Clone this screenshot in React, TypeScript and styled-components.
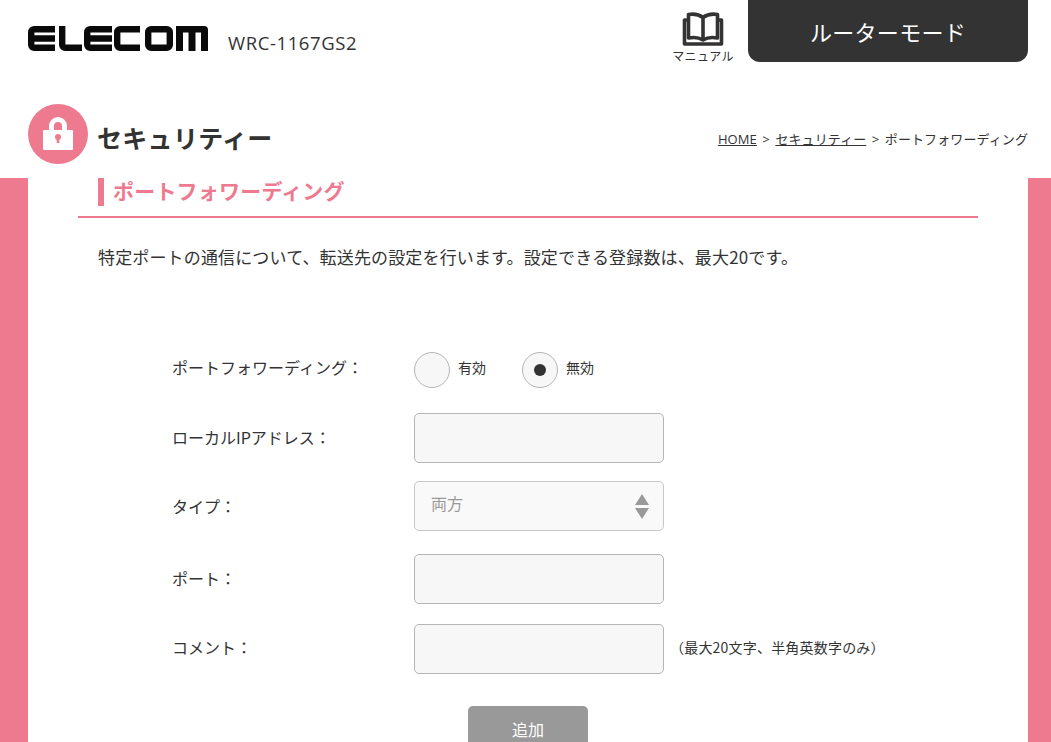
import React from "react";
import styled, { createGlobalStyle } from "styled-components";

const Global = createGlobalStyle`
  html, body { margin: 0; padding: 0; background: #fff; height: 742px; overflow: hidden; }
  * { box-sizing: border-box; }
  body { font-family: "Noto Sans CJK JP", "Noto Sans", sans-serif; color: #333; }
`;
const Page = styled.div`width: 1051px; height: 742px; overflow: hidden; background: #fff;`;
const Header = styled.header`display: flex; height: 62px; padding-left: 28px; align-items: flex-start; margin-bottom: 42px;`;
const Logo = styled.svg`width: 180px; height: 25px; margin-top: 26px; flex: none;`;
const Model = styled.span`margin: 31px 0 0 20px; font: 18.5px/24px "Open Sans", Arial, sans-serif; letter-spacing: 0.6px; color: #333;`;
const ManualLink = styled.a`margin-left: auto; width: 60px; display: flex; flex-direction: column; align-items: center; margin-right: 15px; padding-top: 12px; font-size: 12px; line-height: 16px; letter-spacing: 0.4px; white-space: nowrap; color: #333;`;
const ManualIcon = styled.svg`width: 42px; height: 34px; margin-bottom: 2px; flex: none;`;
const Mode = styled.div`width: 280px; height: 62px; margin-right: 23px; background: #333; color: #fff; border-radius: 0 0 12px 12px; font-size: 22px; letter-spacing: 0.3px; display: flex; align-items: center; justify-content: center;`;
const TitleBar = styled.div`display: flex; align-items: center; height: 60px; padding: 0 23px 0 28px; margin-bottom: 14px;`;
const Badge = styled.svg`width: 60px; height: 60px; flex: none; margin-right: 9px;`;
const Title = styled.h1`margin: 0; padding-top: 6px; font-size: 25px; letter-spacing: 0.3px; font-weight: 700; color: #333; line-height: 60px;`;
const Crumbs = styled.nav`margin-left: auto; font-family: "Open Sans", "Noto Sans CJK JP", sans-serif; font-size: 13px; letter-spacing: 0.1px; word-spacing: 2px; line-height: 20px; margin-top: 10px;`;
const Crumb = styled.a`color: #333; text-decoration: underline;`;
const Body = styled.div`background: #ee7a90; padding: 0 23px 0 28px; height: 564px;`;
const Panel = styled.main`background: #fff; height: 100%; padding: 0 50px;`;
const SectionHead = styled.div`border-bottom: 2px solid #ee7a90; height: 40px; padding-left: 20px;`;
const SectionTitle = styled.h2`margin: 0; height: 28px; border-left: 6px solid #ee7a90; padding-left: 9px; font-size: 21px; letter-spacing: 0.2px; line-height: 24px; font-weight: 700; color: #ee7a90;`;
const Intro = styled.p`margin: 0; padding: 27px 0 0 20px; font-size: 17px; letter-spacing: 0.15px; line-height: 24px; color: #333;`;
const Form = styled.div`margin-top: 83px; padding-left: 94px; display: flex; flex-direction: column;`;
const Row = styled.div<{ $h: number; $gap?: number }>`display: flex; align-items: center; height: ${p => p.$h}px; margin-top: ${p => p.$gap ?? 0}px;`;
const Label = styled.label<{ $lift?: number }>`width: 242px; font-size: 16px; color: #333; flex: none; padding-bottom: ${p => p.$lift ?? 0}px;`;
const RadioDot = styled.span<{ $on?: boolean }>`
  width: 36px; height: 36px; border-radius: 50%; border: 1px solid #b5b5b5; background: #f7f7f7;
  display: flex; align-items: center; justify-content: center; flex: none;
  &::after { content: ""; width: 12px; height: 12px; border-radius: 50%; background: ${p => (p.$on ? "#333" : "transparent")}; }
`;
const RadioText = styled.span`font-size: 14px; margin: -6px 36px 0 8px; color: #333;`;
const Field = styled.div`width: 250px; height: 50px; flex: none; border: 1px solid #b5b5b5; border-radius: 5px; background: #f7f7f7;`;
const Select = styled(Field)`background: #f9f9f9; border-color: #c8c8c8; color: #999; font-size: 16px; display: flex; align-items: center; justify-content: space-between; padding: 0 14px 6px 16px;`;
const Arrows = styled.svg`width: 14px; height: 25px; margin-top: 6px;`;
const Note = styled.span`font-size: 14px; margin-left: 6px; letter-spacing: 0.2px; color: #333; padding-bottom: 4px;`;
const AddRow = styled.div`display: flex; justify-content: center; margin: 32px 0 0;`;
const AddButton = styled.button`width: 120px; height: 50px; padding: 0 0 4px; background: #999; color: #fff; border: 0; border-radius: 5px; font: 16px "Noto Sans CJK JP", sans-serif;`;

export default function App() {
  return (
    <Page>
      <Global />
      <Header>
        <Logo viewBox="0 0 180 25" aria-label="ELECOM">
          <g fill="none" stroke="#0a0a0a" strokeWidth="6.4">
            <path d="M27 3.200H6.200a3 3 0 0 0-3 3v12.600a3 3 0 0 0 3 3H27M3.200 12.500H27" />
            <path d="M34.200 0V18.800a3 3 0 0 0 3 3H54" />
            <path d="M84 3.200H62.200a3 3 0 0 0-3 3v12.600a3 3 0 0 0 3 3H84M59.200 12.500H84" />
            <path d="M112 3.200H92.200a3 3 0 0 0-3 3v12.600a3 3 0 0 0 3 3H112" />
            <rect x="120.200" y="3.200" width="21.600" height="18.600" rx="3" />
          </g>
          <path fill="#0a0a0a" d="M148 0H176a4 4 0 0 1 4 4V25H173V6.400H167.500V25H160.500V6.400H155V25H148Z" />
        </Logo>
        <Model>WRC-1167GS2</Model>
        <ManualLink>
          <ManualIcon viewBox="0 0 42 34">
            <path fill="none" stroke="#333" strokeWidth="3.600" strokeLinejoin="round" d="M21 5.500C17 2.500 12 1.500 6.500 2.500V26C12 25 17 25.500 21 28C25 25.500 30 25 35.500 26V2.500C30 1.500 25 2.500 21 5.500ZM21 5.500V28" />
            <path fill="none" stroke="#333" strokeWidth="3.600" strokeLinejoin="round" d="M6 8H2.500V32H39.500V8H36" />
          </ManualIcon>
          マニュアル
        </ManualLink>
        <Mode>ルーターモード</Mode>
      </Header>
      <TitleBar>
        <Badge viewBox="0 0 60 60">
          <circle cx="30" cy="30" r="30" fill="#ee7a90" />
          <path fill="none" stroke="#fff" strokeWidth="5" d="M23.500 29V22a6.500 6.500 0 0 1 13 0V29" />
          <rect x="15" y="26" width="30" height="20" rx="1" fill="#fff" />
          <circle cx="30" cy="33" r="3" fill="#ee7a90" />
          <rect x="28.700" y="33" width="2.600" height="6" fill="#ee7a90" />
        </Badge>
        <Title>セキュリティー</Title>
        <Crumbs><Crumb>HOME</Crumb> &gt; <Crumb>セキュリティー</Crumb> &gt; ポートフォワーディング</Crumbs>
      </TitleBar>
      <Body>
        <Panel>
          <SectionHead><SectionTitle>ポートフォワーディング</SectionTitle></SectionHead>
          <Intro>特定ポートの通信について、転送先の設定を行います。設定できる登録数は、最大20です。</Intro>
          <Form>
            <Row $h={36}>
              <Label $lift={6}>ポートフォワーディング：</Label>
              <RadioDot /><RadioText>有効</RadioText>
              <RadioDot $on /><RadioText>無効</RadioText>
            </Row>
            <Row $h={50} $gap={25}><Label $lift={2}>ローカルIPアドレス：</Label><Field /></Row>
            <Row $h={50} $gap={18}>
              <Label>タイプ：</Label>
              <Select>両方<Arrows viewBox="0 0 14 25"><path fill="#999" d="M7 0L14 11H0ZM0 14H14L7 25Z" /></Arrows></Select>
            </Row>
            <Row $h={50} $gap={23}><Label $lift={2}>ポート：</Label><Field /></Row>
            <Row $h={50} $gap={20}><Label $lift={4}>コメント：</Label><Field /><Note>（最大20文字、半角英数字のみ）</Note></Row>
          </Form>
          <AddRow><AddButton>追加</AddButton></AddRow>
        </Panel>
      </Body>
    </Page>
  );
}
